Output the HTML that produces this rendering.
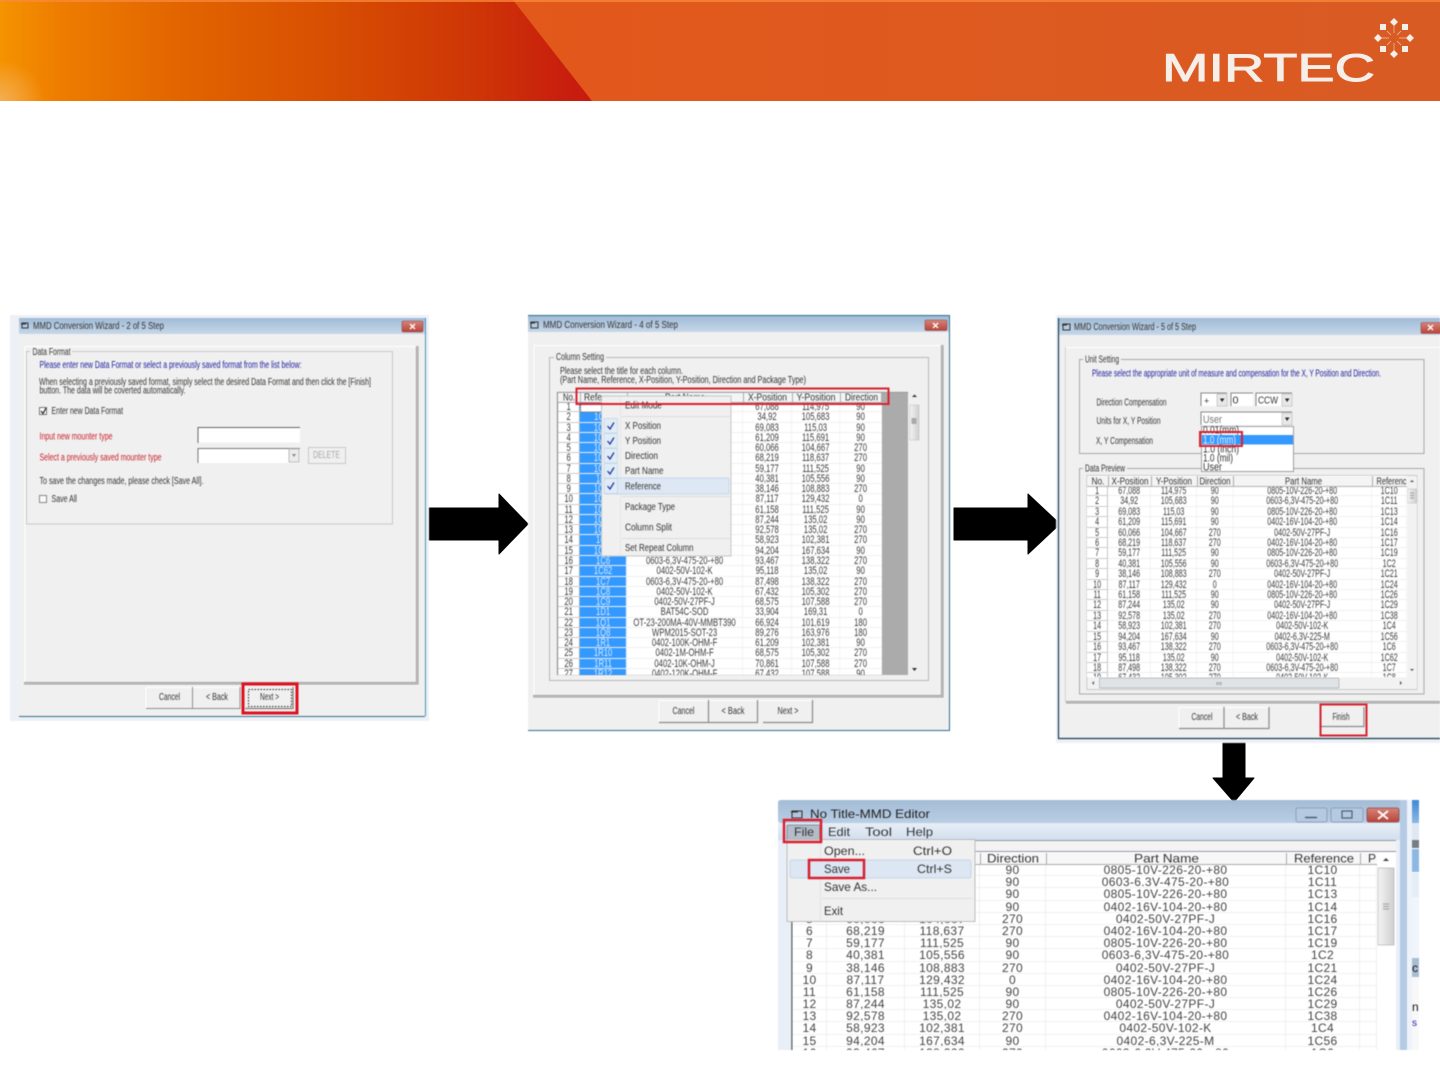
<!DOCTYPE html>
<html><head><meta charset="utf-8"><title>MMD Conversion</title>
<style>
html,body{margin:0;padding:0;background:#fff;width:1440px;height:1080px;overflow:hidden}
body{position:relative;font-family:"Liberation Sans",sans-serif}
svg.l{position:absolute;left:0;top:0;width:1440px;height:1080px}
svg text{font-family:"Liberation Sans",sans-serif;font-size:10px;fill:#333}
.clip{position:absolute;overflow:hidden;background:#fff}
.g{display:grid;transform-origin:0 0;color:#3a3a3a}
.g i{font-style:normal;text-align:center;white-space:nowrap;overflow:hidden;border-bottom:1px solid #efefef;border-right:1px solid #efefef;box-sizing:border-box}
.w2{grid-template-columns:31.4px 67.1px 165.7px 70px 68.6px 60px;grid-auto-rows:10.28px;font-size:11px;line-height:10.28px;transform:scaleX(.7)}
.w2 i:nth-child(6n+2){background:#3399ff;color:#d9edff}
.w3{grid-template-columns:32.3px 66.2px 70.8px 55.4px 213.8px 53.8px;grid-auto-rows:10.41px;font-size:11px;line-height:10.41px;transform:scaleX(.65)}
.w4{grid-template-columns:34px 78px 75px 66px 240px 74px 17px;grid-auto-rows:12.2px;font-size:12px;line-height:12.2px;letter-spacing:.35px;color:#444}
.w2 i:nth-child(6n+1),.w3 i:nth-child(6n+1){border-right:1px solid #aaa;border-bottom:1px solid #ccc}
.h{position:absolute;left:0;top:0}
.soft{filter:blur(.4px)}
</style></head><body>
<svg class="l" viewBox="0 0 1440 1080" style="overflow:hidden">
<defs>
<linearGradient id="hd1" x1="0" x2="1" y1="0" y2="0"><stop offset="0" stop-color="#f59300"/><stop offset=".1" stop-color="#ee7d00"/><stop offset=".3" stop-color="#e26500"/><stop offset=".55" stop-color="#d84f02"/><stop offset=".8" stop-color="#ce3606"/><stop offset=".96" stop-color="#c81e0e"/><stop offset="1" stop-color="#c81a10"/></linearGradient>
<linearGradient id="hd2" x1="0" x2="1" y1="0" y2="0"><stop offset="0" stop-color="#ec5606"/><stop offset=".3" stop-color="#e4581a"/><stop offset="1" stop-color="#d85b24"/></linearGradient>
<radialGradient id="gl" cx="0" cy="1" r="1"><stop offset="0" stop-color="#f4b56a" stop-opacity=".8"/><stop offset="1" stop-color="#f4b56a" stop-opacity="0"/></radialGradient>
<linearGradient id="tb" x1="0" x2="0" y1="0" y2="1"><stop offset="0" stop-color="#a0bbd7"/><stop offset="1" stop-color="#c6d7e8"/></linearGradient>
<linearGradient id="tb4" x1="0" x2="0" y1="0" y2="1"><stop offset="0" stop-color="#a3bcd6"/><stop offset="1" stop-color="#b9cee3"/></linearGradient>
<linearGradient id="mb" x1="0" x2="0" y1="0" y2="1"><stop offset="0" stop-color="#e7eef7"/><stop offset="1" stop-color="#d3dfee"/></linearGradient>
<linearGradient id="cl" x1="0" x2="0" y1="0" y2="1"><stop offset="0" stop-color="#d68478"/><stop offset="1" stop-color="#b8433a"/></linearGradient>
<linearGradient id="sb" x1="0" x2="1" y1="0" y2="0"><stop offset="0" stop-color="#f4f4f4"/><stop offset="1" stop-color="#cfcfcf"/></linearGradient>
<linearGradient id="st" x1="0" x2="0" y1="0" y2="1"><stop offset="0" stop-color="#3f8ad2"/><stop offset="1" stop-color="#8cb8e4"/></linearGradient>
</defs>
<!-- header -->
<rect x="0" y="0" width="1440" height="101" fill="url(#hd2)"/>
<polygon points="0,0 513,0 592,101 0,101" fill="url(#hd1)"/>
<rect x="0" y="60" width="45" height="41" fill="url(#gl)"/>
<rect x="0" y="0" width="1440" height="2" fill="#f98a3a" opacity=".75"/>
<text x="1162" y="81" textLength="213" lengthAdjust="spacingAndGlyphs" style="font-size:39px;fill:#f6efe9;stroke:#f6efe9;stroke-width:.9px">MIRTEC</text>
<g fill="#f6efe9">
<polygon points="1394,18 1398,22 1394,26 1390,22"/><polygon points="1394,50 1398,54 1394,58 1390,54"/><polygon points="1374,38 1378,34 1382,38 1378,42"/><polygon points="1406,38 1410,34 1414,38 1410,42"/>
<rect x="1380" y="24" width="6" height="6"/><rect x="1402" y="24" width="6" height="6"/><rect x="1380" y="46" width="6" height="6"/><rect x="1402" y="46" width="6" height="6"/>
</g>
<path d="M1394 26V33M1394 43V50M1382 38H1389M1399 38H1406M1387 31L1391 35M1401 31L1397 35M1387 45L1391 41M1401 45L1397 41" stroke="#f6efe9" stroke-width=".7" opacity=".7"/>

<!-- arrows -->
<path d="M429 508H499V494L528 524L499 554V540H429Z" fill="#000" stroke="#000" stroke-linejoin="round"/>
<path d="M954 508H1028V494L1060 524L1028 554V540H954Z" fill="#000" stroke="#000" stroke-linejoin="round"/>
<path d="M1223 741H1245V778H1254L1234 802L1213 778H1223Z" fill="#000" stroke="#000" stroke-linejoin="round"/>

<!-- wizard 1 -->
<g class="soft">
<rect x="10" y="315" width="419" height="406" fill="#edf1f6"/>
<rect x="19" y="334" width="406" height="382" fill="#f0f0f0"/>
<rect x="19" y="318" width="406" height="16" fill="url(#tb)"/>
<path d="M425.500 318V716" stroke="#4a93b8"/><path d="M19 716.500H425" stroke="#2c7390"/>
<path d="M22 328V323H28V328ZM21 324H26" fill="none" stroke="#333"/>
<text x="33" y="329" textLength="131" lengthAdjust="spacingAndGlyphs">MMD Conversion Wizard - 2 of 5 Step</text>
<rect x="402" y="321" width="21" height="11" rx="1.500" fill="url(#cl)" stroke="#8e4a48" stroke-width=".6"/>
<path d="M410 324L415 329M415 324L410 329" stroke="#fff" stroke-width="1.400"/>
<path d="M25 682.500V346.500H416.500V682.500H25Z" fill="none" stroke="#fff"/>
<path d="M416.500 346V682.500H24M418 346V684H24" fill="none" stroke="#9a9a9a"/>
<rect x="26.500" y="351.500" width="366" height="172.500" fill="#f0f0f0" stroke="#c8c8c8"/>
<rect x="30" y="349" width="42" height="6" fill="#f0f0f0"/>
<text x="32.500" y="355" textLength="38" lengthAdjust="spacingAndGlyphs">Data Format</text>
<text x="39.500" y="368" textLength="262" lengthAdjust="spacingAndGlyphs" style="fill:#1a1a9e">Please enter new Data Format or select a previously saved format from the list below:</text>
<text x="39" y="385" textLength="332" lengthAdjust="spacingAndGlyphs">When selecting a previously saved format, simply select the desired Data Format and then click the [Finish]</text>
<text x="39.500" y="393.500" textLength="146" lengthAdjust="spacingAndGlyphs">button. The data will be coverted automatically.</text>
<rect x="39.500" y="407.500" width="7" height="7" fill="#fff" stroke="#777"/><path d="M41 411L43 413.500L46 408" fill="none" stroke="#222" stroke-width="1.200"/>
<text x="51.500" y="414" textLength="71.500" lengthAdjust="spacingAndGlyphs">Enter new Data Format</text>
<text x="39.500" y="439.500" textLength="73" lengthAdjust="spacingAndGlyphs" style="fill:#c8202a">Input new mounter type</text>
<text x="39.500" y="460.500" textLength="122" lengthAdjust="spacingAndGlyphs" style="fill:#c8202a">Select a previously saved mounter type</text>
<rect x="198" y="427.500" width="102" height="15" fill="#fff"/><path d="M198 443V427.500H300" fill="none" stroke="#666"/>
<rect x="198" y="448.500" width="102" height="14.500" fill="#fff"/><path d="M198 463V448.500H300" fill="none" stroke="#777"/>
<rect x="289" y="449" width="10" height="13" fill="#ececec" stroke="#bbb"/><path d="M292 454H296L294 457Z" fill="#888"/>
<rect x="308.500" y="447.500" width="37" height="16" fill="#f0f0f0" stroke="#c8c8c8"/>
<text x="313" y="458" textLength="27" lengthAdjust="spacingAndGlyphs" style="fill:#a8a8a8">DELETE</text>
<text x="39.500" y="484" textLength="164" lengthAdjust="spacingAndGlyphs">To save the changes made, please check [Save All].</text>
<rect x="39.500" y="495.500" width="7" height="7" fill="#fbfbfb" stroke="#888"/>
<text x="51.500" y="502" textLength="25.500" lengthAdjust="spacingAndGlyphs">Save All</text>
<path d="M146 708.500V687.500H240" fill="none" stroke="#fff"/>
<path d="M146 708.500H240V687M192.500 687V708" fill="none" stroke="#8e8e8e"/>
<text x="159" y="700" textLength="21" lengthAdjust="spacingAndGlyphs">Cancel</text>
<text x="206" y="700" textLength="22" lengthAdjust="spacingAndGlyphs">&lt; Back</text>
<rect x="248.500" y="689.500" width="43" height="17" fill="none" stroke="#222" stroke-dasharray="1.500 1.500"/>
<path d="M245 708.500H293V687" fill="none" stroke="#6a6a6a"/>
<text x="260" y="700" textLength="19" lengthAdjust="spacingAndGlyphs">Next &gt;</text>

<!-- wizard 2 -->
<rect x="528" y="315" width="422" height="416" fill="#f0f0f0"/>
<rect x="528" y="316" width="421" height="16" fill="url(#tb)"/>
<path d="M528 315.500H950M949.500 315V730M528 730.500H950" fill="none" stroke="#2c6f8e"/>
<path d="M531 328V322H538V328ZM530 323H535" fill="none" stroke="#333"/>
<text x="543" y="328" textLength="135" lengthAdjust="spacingAndGlyphs">MMD Conversion Wizard - 4 of 5 Step</text>
<rect x="925" y="320" width="22" height="10.500" rx="1.500" fill="url(#cl)" stroke="#8e4a48" stroke-width=".6"/>
<path d="M933 323L938 328M938 323L933 328" stroke="#fff" stroke-width="1.400"/>
<path d="M534 695V345.500H941" fill="none" stroke="#fff"/>
<path d="M941.500 345V695.500H533M943 345V697H533" fill="none" stroke="#9a9a9a"/>
<rect x="549.500" y="357.500" width="379" height="323" fill="none" stroke="#b8b8b8"/>
<rect x="554" y="354" width="52" height="6" fill="#f0f0f0"/>
<text x="556" y="360" textLength="48" lengthAdjust="spacingAndGlyphs">Column Setting</text>
<text x="560" y="374" textLength="123" lengthAdjust="spacingAndGlyphs">Please select the title for each column.</text>
<text x="560" y="383" textLength="246" lengthAdjust="spacingAndGlyphs">(Part Name, Reference, X-Position, Y-Position, Direction and Package Type)</text>
<rect x="557" y="392" width="363" height="283" fill="#ababab"/>
<rect x="908" y="392" width="12" height="283" fill="#f0f0f0"/>
<rect x="910" y="405" width="9" height="35" fill="url(#sb)" stroke="#bbb" stroke-width=".5"/>
<path d="M912 397H917L914.500 394.500ZM912 668H917L914.500 671Z" fill="#333"/>
<rect x="911.500" y="418" width="5" height="6" fill="#aaa"/>
<path d="M659 722.500V700.500H812" fill="none" stroke="#fff"/>
<path d="M659 722.500H708.500V700M709 722.500H757.500V700M763 722.500H812.500V700" fill="none" stroke="#8a8a8a" stroke-width="1.200"/>
<text x="672.500" y="714" textLength="22" lengthAdjust="spacingAndGlyphs">Cancel</text>
<text x="721.500" y="714" textLength="23" lengthAdjust="spacingAndGlyphs">&lt; Back</text>
<text x="777.500" y="714" textLength="21" lengthAdjust="spacingAndGlyphs">Next &gt;</text>

<!-- wizard 3 -->
<rect x="1056" y="315" width="384" height="428" fill="#edf1f6"/>
<rect x="1058" y="335" width="382" height="403" fill="#f0f0f0"/>
<rect x="1058" y="318" width="382" height="17" fill="url(#tb)"/>
<path d="M1058.500 318V739M1058 738.500H1440" fill="none" stroke="#173e50" stroke-width="1.200"/>
<path d="M1063 330V324H1070V330ZM1062 325H1067" fill="none" stroke="#333"/>
<text x="1074" y="330" textLength="122" lengthAdjust="spacingAndGlyphs">MMD Conversion Wizard - 5 of 5 Step</text>
<rect x="1421" y="322.500" width="22" height="11" rx="1.500" fill="url(#cl)" stroke="#8e4a48" stroke-width=".6"/>
<path d="M1428 325L1433 330M1433 325L1428 330" stroke="#fff" stroke-width="1.400"/>
<path d="M1066 700V347.500H1440" fill="none" stroke="#fff"/>
<path d="M1066 701.500H1440M1066 703H1440" fill="none" stroke="#9a9a9a"/>
<path d="M1065.500 347V702" stroke="#cfcfcf"/>
<rect x="1079.500" y="359.500" width="344.500" height="94" fill="none" stroke="#a8a8a8"/>
<rect x="1083" y="356" width="38" height="6" fill="#f0f0f0"/>
<text x="1085" y="362.500" textLength="34" lengthAdjust="spacingAndGlyphs">Unit Setting</text>
<text x="1092" y="376.500" textLength="289" lengthAdjust="spacingAndGlyphs" style="fill:#1a1a9e">Please select the appropriate unit of measure and compensation for the X, Y Position and Direction.</text>
<text x="1096.500" y="405.500" textLength="70" lengthAdjust="spacingAndGlyphs">Direction Compensation</text>
<text x="1096.500" y="424" textLength="64" lengthAdjust="spacingAndGlyphs">Units for X, Y Position</text>
<text x="1096" y="444" textLength="57" lengthAdjust="spacingAndGlyphs">X, Y Compensation</text>
<rect x="1079.500" y="468.500" width="344.500" height="225.500" fill="none" stroke="#a8a8a8"/>
<rect x="1083" y="465" width="44" height="6" fill="#f0f0f0"/>
<text x="1085" y="471.500" textLength="40" lengthAdjust="spacingAndGlyphs">Data Preview</text>
<rect x="1087" y="475.500" width="330" height="214" fill="#fff" stroke="#aaa" stroke-width=".6"/>
<rect x="1407" y="476" width="10" height="201" fill="#f2f2f2"/>
<rect x="1407.500" y="489" width="9" height="14" fill="url(#sb)" stroke="#bbb" stroke-width=".5"/>
<path d="M1410 493H1414M1410 495.500H1414M1410 498H1414" stroke="#888" stroke-width=".7"/>
<path d="M1410 482H1414L1412 480ZM1410 669H1414L1412 671Z" fill="#555"/>
<rect x="1088" y="677" width="329" height="12" fill="#f2f2f2"/>
<rect x="1099.500" y="678" width="239.500" height="10" rx="1" fill="#dfe3e6" stroke="#a9b0b5" stroke-width=".7"/>
<path d="M1094 681V685L1092 683ZM1400 681V685L1402 683Z" fill="#555"/>
<path d="M1217 682V685M1219 682V685M1221 682V685" stroke="#777" stroke-width=".7"/>
<path d="M1179 728.500V707.500H1269" fill="none" stroke="#fff"/>
<path d="M1179 728.500H1269V707M1224 707V728" fill="none" stroke="#8a8a8a" stroke-width="1.200"/>
<path d="M1320 726.500H1364V707" fill="none" stroke="#8a8a8a" stroke-width="1.200"/>
<text x="1191.500" y="720" textLength="21" lengthAdjust="spacingAndGlyphs">Cancel</text>
<text x="1236" y="720" textLength="22" lengthAdjust="spacingAndGlyphs">&lt; Back</text>
<text x="1332.500" y="720" textLength="17" lengthAdjust="spacingAndGlyphs">Finish</text>

<!-- wizard 4 -->
<rect x="778" y="800" width="629" height="250" fill="#e9eff7"/>
<rect x="778" y="800" width="629" height="23" rx="3" fill="url(#tb4)"/>
<rect x="778" y="823" width="629" height="17" fill="url(#mb)"/>
<rect x="793" y="840" width="603" height="12" fill="#f3f3f3"/>
<rect x="793" y="852" width="603" height="198" fill="#fff"/>
<path d="M792 846V1050" stroke="#666" stroke-width="1.500"/>
<path d="M793 840.500H1396M793 851.500H1396" stroke="#8f98a2"/>
<path d="M792 818V811H802V818ZM791 812H798" fill="none" stroke="#333" stroke-width="1.100"/>
<text x="810" y="818" textLength="120" lengthAdjust="spacingAndGlyphs" style="font-size:12px;fill:#222">No Title-MMD Editor</text>
<rect x="1296" y="808" width="31" height="14" rx="2" fill="#b5cae0" stroke="#7d97b2" stroke-width=".8"/>
<path d="M1305 817.500H1317" stroke="#4c5f74" stroke-width="1.500"/>
<rect x="1331" y="808" width="32" height="14" rx="2" fill="#b5cae0" stroke="#7d97b2" stroke-width=".8"/>
<rect x="1342" y="811" width="10" height="7" fill="none" stroke="#4c5f74" stroke-width="1.200"/>
<rect x="1367" y="808" width="32" height="14" rx="2" fill="url(#cl)" stroke="#8e4a48" stroke-width=".8"/>
<path d="M1378 811L1388 819M1388 811L1378 819" stroke="#fff" stroke-width="1.800"/>
<rect x="787" y="825" width="33" height="15" rx="1" fill="#b3bcc7" stroke="#6f7c8a" stroke-width=".8"/>
<g style="fill:#222">
<text x="794" y="836" textLength="20" lengthAdjust="spacingAndGlyphs" style="font-size:12px">File</text>
<text x="828" y="836" textLength="22" lengthAdjust="spacingAndGlyphs" style="font-size:12px">Edit</text>
<text x="865" y="836" textLength="27" lengthAdjust="spacingAndGlyphs" style="font-size:12px">Tool</text>
<text x="906" y="836" textLength="27" lengthAdjust="spacingAndGlyphs" style="font-size:12px">Help</text>
</g>
<rect x="1378" y="868" width="16" height="77" fill="url(#sb)" stroke="#aaa" stroke-width=".6"/>
<path d="M1383 904H1389M1383 906.500H1389M1383 909H1389" stroke="#888" stroke-width=".8"/>
<path d="M1383 861H1389L1386 858Z" fill="#444"/>
<!-- right fragment -->
<rect x="1400" y="800" width="7" height="250" fill="#b4cbe3"/>
<rect x="1407" y="800" width="5" height="250" fill="#eef3fa"/>
<rect x="1412" y="800" width="7" height="23" fill="url(#st)"/>
<rect x="1412" y="823" width="7" height="17" fill="#dfe7f2"/>
<rect x="1412" y="840" width="7" height="8" fill="#777d84"/>
<rect x="1412" y="849" width="7" height="23" fill="#8cb8e4"/>
<rect x="1412" y="873" width="7" height="24" fill="#e4ecf6"/>
<rect x="1412" y="897" width="7" height="61" fill="#f0f4fb"/>
<rect x="1412" y="958" width="7" height="19" fill="#a8bcd2"/>
<rect x="1412" y="977" width="7" height="73" fill="#f8f8f8"/>
<text x="1412" y="972" style="font-size:12px;fill:#111">c</text>
<text x="1412" y="1011" style="font-size:12px;fill:#111">n</text>
<text x="1412" y="1026" style="font-size:10px;fill:#2222aa">s</text>
</g>
</svg>

<!-- data grids -->
<div class="clip soft" style="left:558px;top:402px;width:324px;height:273px">
<div class="g w2 h">
<i>1</i><i>1C10</i><i>0805-10V-226-20-+80</i><i>67,088</i><i>114,975</i><i>90</i>
<i>2</i><i>1C11</i><i>0603-6,3V-475-20-+80</i><i>34,92</i><i>105,683</i><i>90</i>
<i>3</i><i>1C13</i><i>0805-10V-226-20-+80</i><i>69,083</i><i>115,03</i><i>90</i>
<i>4</i><i>1C14</i><i>0402-16V-104-20-+80</i><i>61,209</i><i>115,691</i><i>90</i>
<i>5</i><i>1C16</i><i>0402-50V-27PF-J</i><i>60,066</i><i>104,667</i><i>270</i>
<i>6</i><i>1C17</i><i>0402-16V-104-20-+80</i><i>68,219</i><i>118,637</i><i>270</i>
<i>7</i><i>1C19</i><i>0805-10V-226-20-+80</i><i>59,177</i><i>111,525</i><i>90</i>
<i>8</i><i>1C2</i><i>0603-6,3V-475-20-+80</i><i>40,381</i><i>105,556</i><i>90</i>
<i>9</i><i>1C21</i><i>0402-50V-27PF-J</i><i>38,146</i><i>108,883</i><i>270</i>
<i>10</i><i>1C24</i><i>0402-16V-104-20-+80</i><i>87,117</i><i>129,432</i><i>0</i>
<i>11</i><i>1C26</i><i>0805-10V-226-20-+80</i><i>61,158</i><i>111,525</i><i>90</i>
<i>12</i><i>1C29</i><i>0402-50V-27PF-J</i><i>87,244</i><i>135,02</i><i>90</i>
<i>13</i><i>1C38</i><i>0402-16V-104-20-+80</i><i>92,578</i><i>135,02</i><i>270</i>
<i>14</i><i>1C4</i><i>0402-50V-102-K</i><i>58,923</i><i>102,381</i><i>270</i>
<i>15</i><i>1C56</i><i>0402-6,3V-225-M</i><i>94,204</i><i>167,634</i><i>90</i>
<i>16</i><i>1C6</i><i>0603-6,3V-475-20-+80</i><i>93,467</i><i>138,322</i><i>270</i>
<i>17</i><i>1C62</i><i>0402-50V-102-K</i><i>95,118</i><i>135,02</i><i>90</i>
<i>18</i><i>1C7</i><i>0603-6,3V-475-20-+80</i><i>87,498</i><i>138,322</i><i>270</i>
<i>19</i><i>1C8</i><i>0402-50V-102-K</i><i>67,432</i><i>105,302</i><i>270</i>
<i>20</i><i>1C9</i><i>0402-50V-27PF-J</i><i>68,575</i><i>107,588</i><i>270</i>
<i>21</i><i>1D1</i><i>BAT54C-SOD</i><i>33,904</i><i>169,31</i><i>0</i>
<i>22</i><i>1Q1</i><i>OT-23-200MA-40V-MMBT390</i><i>66,924</i><i>101,619</i><i>180</i>
<i>23</i><i>1Q8</i><i>WPM2015-SOT-23</i><i>89,276</i><i>163,976</i><i>180</i>
<i>24</i><i>1R1</i><i>0402-100K-OHM-F</i><i>61,209</i><i>102,381</i><i>90</i>
<i>25</i><i>1R10</i><i>0402-1M-OHM-F</i><i>68,575</i><i>105,302</i><i>270</i>
<i>26</i><i>1R11</i><i>0402-10K-OHM-J</i><i>70,861</i><i>107,588</i><i>270</i>
<i>27</i><i>1R12</i><i>0402-120K-OHM-F</i><i>67,432</i><i>107,588</i><i>90</i>
</div></div>

<div class="clip soft" style="left:1087px;top:486px;width:320px;height:191px">
<div class="g w3 h">
<i>1</i><i>67,088</i><i>114,975</i><i>90</i><i>0805-10V-226-20-+80</i><i>1C10</i>
<i>2</i><i>34,92</i><i>105,683</i><i>90</i><i>0603-6,3V-475-20-+80</i><i>1C11</i>
<i>3</i><i>69,083</i><i>115,03</i><i>90</i><i>0805-10V-226-20-+80</i><i>1C13</i>
<i>4</i><i>61,209</i><i>115,691</i><i>90</i><i>0402-16V-104-20-+80</i><i>1C14</i>
<i>5</i><i>60,066</i><i>104,667</i><i>270</i><i>0402-50V-27PF-J</i><i>1C16</i>
<i>6</i><i>68,219</i><i>118,637</i><i>270</i><i>0402-16V-104-20-+80</i><i>1C17</i>
<i>7</i><i>59,177</i><i>111,525</i><i>90</i><i>0805-10V-226-20-+80</i><i>1C19</i>
<i>8</i><i>40,381</i><i>105,556</i><i>90</i><i>0603-6,3V-475-20-+80</i><i>1C2</i>
<i>9</i><i>38,146</i><i>108,883</i><i>270</i><i>0402-50V-27PF-J</i><i>1C21</i>
<i>10</i><i>87,117</i><i>129,432</i><i>0</i><i>0402-16V-104-20-+80</i><i>1C24</i>
<i>11</i><i>61,158</i><i>111,525</i><i>90</i><i>0805-10V-226-20-+80</i><i>1C26</i>
<i>12</i><i>87,244</i><i>135,02</i><i>90</i><i>0402-50V-27PF-J</i><i>1C29</i>
<i>13</i><i>92,578</i><i>135,02</i><i>270</i><i>0402-16V-104-20-+80</i><i>1C38</i>
<i>14</i><i>58,923</i><i>102,381</i><i>270</i><i>0402-50V-102-K</i><i>1C4</i>
<i>15</i><i>94,204</i><i>167,634</i><i>90</i><i>0402-6,3V-225-M</i><i>1C56</i>
<i>16</i><i>93,467</i><i>138,322</i><i>270</i><i>0603-6,3V-475-20-+80</i><i>1C6</i>
<i>17</i><i>95,118</i><i>135,02</i><i>90</i><i>0402-50V-102-K</i><i>1C62</i>
<i>18</i><i>87,498</i><i>138,322</i><i>270</i><i>0603-6,3V-475-20-+80</i><i>1C7</i>
<i>19</i><i>67,432</i><i>105,302</i><i>270</i><i>0402-50V-102-K</i><i>1C8</i>
</div></div>

<div class="clip soft" style="left:793px;top:864px;width:584px;height:186px">
<div class="g w4 h">
<i>1</i><i>67,088</i><i>114,975</i><i>90</i><i>0805-10V-226-20-+80</i><i>1C10</i><i></i>
<i>2</i><i>34,92</i><i>105,683</i><i>90</i><i>0603-6.3V-475-20-+80</i><i>1C11</i><i></i>
<i>3</i><i>69,083</i><i>115,03</i><i>90</i><i>0805-10V-226-20-+80</i><i>1C13</i><i></i>
<i>4</i><i>61,209</i><i>115,691</i><i>90</i><i>0402-16V-104-20-+80</i><i>1C14</i><i></i>
<i>5</i><i>60,066</i><i>104,667</i><i>270</i><i>0402-50V-27PF-J</i><i>1C16</i><i></i>
<i>6</i><i>68,219</i><i>118,637</i><i>270</i><i>0402-16V-104-20-+80</i><i>1C17</i><i></i>
<i>7</i><i>59,177</i><i>111,525</i><i>90</i><i>0805-10V-226-20-+80</i><i>1C19</i><i></i>
<i>8</i><i>40,381</i><i>105,556</i><i>90</i><i>0603-6,3V-475-20-+80</i><i>1C2</i><i></i>
<i>9</i><i>38,146</i><i>108,883</i><i>270</i><i>0402-50V-27PF-J</i><i>1C21</i><i></i>
<i>10</i><i>87,117</i><i>129,432</i><i>0</i><i>0402-16V-104-20-+80</i><i>1C24</i><i></i>
<i>11</i><i>61,158</i><i>111,525</i><i>90</i><i>0805-10V-226-20-+80</i><i>1C26</i><i></i>
<i>12</i><i>87,244</i><i>135,02</i><i>90</i><i>0402-50V-27PF-J</i><i>1C29</i><i></i>
<i>13</i><i>92,578</i><i>135,02</i><i>270</i><i>0402-16V-104-20-+80</i><i>1C38</i><i></i>
<i>14</i><i>58,923</i><i>102,381</i><i>270</i><i>0402-50V-102-K</i><i>1C4</i><i></i>
<i>15</i><i>94,204</i><i>167,634</i><i>90</i><i>0402-6,3V-225-M</i><i>1C56</i><i></i>
<i>16</i><i>93,467</i><i>138,322</i><i>270</i><i>0603-6,3V-475-20-+80</i><i>1C6</i><i></i>
</div></div>

<svg class="l soft" viewBox="0 0 1440 1080">
<!-- W2 header + menu -->
<rect x="558" y="392.500" width="324" height="9.500" fill="#f4f4f4"/>
<path d="M557 392.500H908M557.500 392V675M557 402.500H882M580.500 393V402M627.500 393V402M743.500 393V402M792.500 393V402M840.500 393V402M881.500 393V402" fill="none" stroke="#9a9a9a" stroke-width=".8"/>
<text x="563" y="400.500" textLength="12" lengthAdjust="spacingAndGlyphs">No.</text>
<text x="584" y="400.500" textLength="18" lengthAdjust="spacingAndGlyphs">Refe</text>
<text x="665" y="400.500" textLength="40" lengthAdjust="spacingAndGlyphs">Part Name</text>
<text x="748" y="400.500" textLength="39" lengthAdjust="spacingAndGlyphs">X-Position</text>
<text x="796.500" y="400.500" textLength="39" lengthAdjust="spacingAndGlyphs">Y-Position</text>
<text x="845" y="400.500" textLength="33" lengthAdjust="spacingAndGlyphs">Direction</text>
<rect x="580" y="403" width="21" height="9" fill="#fff"/>
<path d="M580.500 403V412H601" fill="none" stroke="#222" stroke-dasharray="1 1"/>
<rect x="601.500" y="396" width="129.500" height="160" fill="#f0f0f0" stroke="#bcbcbc" stroke-width=".8"/>
<path d="M620.500 397V555" stroke="#e4e4e4"/>
<path d="M622 416.500H730M622 496.500H730M622 538.500H730" stroke="#dcdcdc"/>
<rect x="604" y="478" width="125" height="16" rx="1.500" fill="#dde8f4" stroke="#bcd0e6" stroke-width=".7"/>
<g fill="#e2ecf6" stroke="#bfd3e8" stroke-width=".7">
<rect x="604" y="418.500" width="13.500" height="14.500" rx="1"/><rect x="604" y="433.500" width="13.500" height="14.500" rx="1"/><rect x="604" y="448.500" width="13.500" height="14.500" rx="1"/><rect x="604" y="463.500" width="13.500" height="14.500" rx="1"/><rect x="604" y="478.500" width="13.500" height="15" rx="1"/>
</g>
<path d="M607.500 426L610 429L614 422.500M607.500 441L610 444L614 437.500M607.500 456L610 459L614 452.500M607.500 471L610 474L614 467.500M607.500 486L610 489L614 482.500" fill="none" stroke="#1f3aa8" stroke-width="1.300"/>
<g style="fill:#333">
<text x="625" y="408.500" textLength="37" lengthAdjust="spacingAndGlyphs">Edit Mode</text>
<text x="625" y="429" textLength="36" lengthAdjust="spacingAndGlyphs">X Position</text>
<text x="625" y="444" textLength="36" lengthAdjust="spacingAndGlyphs">Y Position</text>
<text x="625" y="459" textLength="33" lengthAdjust="spacingAndGlyphs">Direction</text>
<text x="625" y="474" textLength="38.500" lengthAdjust="spacingAndGlyphs">Part Name</text>
<text x="625" y="489.500" textLength="36" lengthAdjust="spacingAndGlyphs">Reference</text>
<text x="625" y="510" textLength="50" lengthAdjust="spacingAndGlyphs">Package Type</text>
<text x="625" y="530.500" textLength="47" lengthAdjust="spacingAndGlyphs">Column Split</text>
<text x="625" y="551" textLength="68.500" lengthAdjust="spacingAndGlyphs">Set Repeat Column</text>
</g>
<rect x="576.500" y="388.500" width="312" height="15.500" fill="none" stroke="#dc1f2e" stroke-width="2"/>

<!-- W3 header, combos, dropdown -->
<rect x="1087.500" y="476" width="319.500" height="10" fill="#f4f4f4"/>
<path d="M1087 486.500H1407M1108.500 476V486M1151.500 476V486M1197.500 476V486M1233.500 476V486M1372.500 476V486" fill="none" stroke="#9a9a9a" stroke-width=".8"/>
<text x="1091.500" y="484.500" textLength="13" lengthAdjust="spacingAndGlyphs">No.</text>
<text x="1111.500" y="484.500" textLength="37" lengthAdjust="spacingAndGlyphs">X-Position</text>
<text x="1156" y="484.500" textLength="36" lengthAdjust="spacingAndGlyphs">Y-Position</text>
<text x="1199.500" y="484.500" textLength="31" lengthAdjust="spacingAndGlyphs">Direction</text>
<text x="1285" y="484.500" textLength="37" lengthAdjust="spacingAndGlyphs">Part Name</text>
<text x="1376.500" y="484.500" textLength="30" lengthAdjust="spacingAndGlyphs">Referenc</text>
<g fill="#fff">
<rect x="1201" y="393" width="26" height="13"/><rect x="1231" y="393" width="22" height="13"/><rect x="1256" y="393" width="36" height="13"/><rect x="1201" y="412" width="91" height="13"/>
</g>
<path d="M1201 406V393H1227M1231 406V393H1253M1256 406V393H1292M1201 425V412H1292" fill="none" stroke="#666" stroke-width=".8"/>
<g fill="#e8e8e8" stroke="#aaa" stroke-width=".5"><rect x="1217" y="394" width="10" height="12"/><rect x="1282" y="394" width="10" height="12"/><rect x="1282" y="413" width="10" height="12"/></g>
<path d="M1220 398.500H1224.500L1222 402ZM1285 398.500H1289.500L1287 402ZM1285 417.500H1289.500L1287 421Z" fill="#222"/>
<text x="1204" y="404" style="font-size:9px">+</text>
<text x="1232.500" y="403.500" textLength="6" lengthAdjust="spacingAndGlyphs">0</text>
<text x="1258" y="403.500" textLength="20" lengthAdjust="spacingAndGlyphs">CCW</text>
<text x="1203" y="423" textLength="19" lengthAdjust="spacingAndGlyphs" style="font-size:11px;fill:#777">User</text>
<rect x="1201.500" y="426.500" width="92" height="45" fill="#fff" stroke="#8a8a8a" stroke-width=".8"/>
<text x="1203" y="433.500" textLength="36" lengthAdjust="spacingAndGlyphs" style="font-size:11px">0.01(mm)</text>
<text x="1203" y="452.500" textLength="36" lengthAdjust="spacingAndGlyphs" style="font-size:11px">1.0 (inch)</text>
<rect x="1202" y="435" width="91" height="9.500" fill="#3399ff"/>
<text x="1203" y="443.500" textLength="33" lengthAdjust="spacingAndGlyphs" style="font-size:11px;fill:#e8f4ff">1.0 (mm)</text>
<text x="1203" y="461.500" textLength="30" lengthAdjust="spacingAndGlyphs" style="font-size:11px">1.0 (mil)</text>
<text x="1203" y="470.500" textLength="19" lengthAdjust="spacingAndGlyphs" style="font-size:11px">User</text>
<rect x="1200" y="432" width="42" height="14" fill="none" stroke="#d81f2e" stroke-width="2"/>

<!-- W4 header + menu -->
<rect x="793" y="853" width="584" height="11" fill="#f7f7f7"/>
<path d="M793 864.500H1377M980.500 853V864M1046.500 853V864M1286.500 853V864M1360.500 853V864" fill="none" stroke="#aaa"/>
<text x="987" y="862.500" textLength="52" lengthAdjust="spacingAndGlyphs" style="font-size:12px">Direction</text>
<text x="1134" y="862.500" textLength="65" lengthAdjust="spacingAndGlyphs" style="font-size:12px">Part Name</text>
<text x="1294" y="862.500" textLength="60" lengthAdjust="spacingAndGlyphs" style="font-size:12px">Reference</text>
<text x="1368" y="862.500" style="font-size:12px">P</text>
<rect x="787" y="839.500" width="188" height="82" fill="#f0f0f0" stroke="#bcbcbc"/>
<path d="M820.500 841V920" stroke="#e2e2e2"/>
<path d="M822 898.500H973" stroke="#dfdfdf"/>
<rect x="790" y="860" width="181" height="18" rx="2" fill="#dce7f3" stroke="#bcd0e6" stroke-width=".8"/>
<g style="fill:#333">
<text x="824" y="855" textLength="41" lengthAdjust="spacingAndGlyphs" style="font-size:12px">Open...</text>
<text x="913" y="855" textLength="39" lengthAdjust="spacingAndGlyphs" style="font-size:12px">Ctrl+O</text>
<text x="824" y="873" textLength="26" lengthAdjust="spacingAndGlyphs" style="font-size:12px">Save</text>
<text x="917" y="873" textLength="35" lengthAdjust="spacingAndGlyphs" style="font-size:12px">Ctrl+S</text>
<text x="824" y="891" textLength="53" lengthAdjust="spacingAndGlyphs" style="font-size:12px">Save As...</text>
<text x="824" y="915" textLength="19" lengthAdjust="spacingAndGlyphs" style="font-size:12px">Exit</text>
</g>
<rect x="784" y="820" width="37" height="22" fill="none" stroke="#d81f2e" stroke-width="2.500"/>
<rect x="809" y="860" width="55" height="18" fill="none" stroke="#d81f2e" stroke-width="2.500"/>

<!-- W1 / W3 red boxes -->
<rect x="243" y="684" width="54" height="29" fill="none" stroke="#e01020" stroke-width="3"/>
<rect x="1320.500" y="704.500" width="46" height="31" fill="none" stroke="#d81f2e" stroke-width="2"/>
</svg>
</body></html>
